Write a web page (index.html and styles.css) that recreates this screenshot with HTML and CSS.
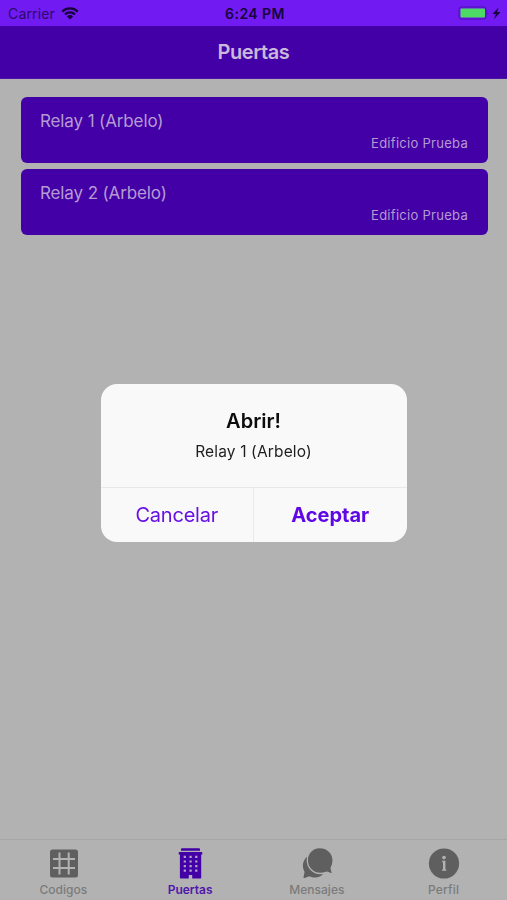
FILE: index.html
```html
<!DOCTYPE html>
<html lang="es">
<head>
    <meta charset="UTF-8">
    <meta name="viewport" content="width=device-width, initial-scale=1.0">
    <title>Puertas</title>
    <link rel="stylesheet" href="styles.css">
</head>
<body>
    <div class="app">
        <div class="status-bar">
            <div class="status-left">
                <span class="carrier">Carrier</span>
                <svg class="wifi" width="18" height="13" viewBox="0 0 18 13">
                    <path d="M1.2 4.6a11.2 11.2 0 0 1 15.6 0M4 7.4a7.2 7.2 0 0 1 10 0" fill="none" stroke="#17043c" stroke-width="2.2"/>
                    <path d="M5.9 9.4a4.5 4.5 0 0 1 6.2 0L9 12.6z" fill="#17043c"/>
                </svg>
            </div>
            <div class="status-time">6:24 PM</div>
            <div class="status-right">
                <svg width="44" height="14" viewBox="0 0 44 14">
                    <rect x="1" y="1" width="27" height="12" rx="2.5" fill="none" stroke="#4b0cac"/>
                    <rect x="2.5" y="2.5" width="24.5" height="9" rx="1" fill="#4cd964"/>
                    <path d="M29.6 5.200q1.600 1.800 0 3.600z" fill="#4b0cac"/>
                    <path d="M40.8 1.200l-6.300 6.800h3.300l-1.900 5.200 6.600-7.200h-3.500z" fill="#17043c"/>
                </svg>
            </div>
        </div>
        <div class="header">Puertas</div>
        <div class="content">
            <div class="card">
                <div class="card-title">Relay 1 (Arbelo)</div>
                <div class="card-note">Edificio Prueba</div>
            </div>
            <div class="card">
                <div class="card-title">Relay 2 (Arbelo)</div>
                <div class="card-note">Edificio Prueba</div>
            </div>
        </div>
        <div class="tabs">
            <a class="tab" href="javascript:;">
                <svg width="32" height="32" viewBox="0 0 32 32">
                    <rect x="3" y="1.500" width="28" height="28" rx="2.500" fill="#5f5f5f"/>
                    <path d="M12.500 4.500v22M21.700 4.500v22M6 10.900h22M6 20.100h22" stroke="#b2b2b2" stroke-width="2" fill="none"/>
                </svg>
                <span>Codigos</span>
            </a>
            <a class="tab active" href="javascript:;">
                <svg width="32" height="32" viewBox="0 0 32 32">
                    <path d="M8 .2h17a1 1 0 0 1 1 1v1.500H7V1.200a1 1 0 0 1 1-1zM5.500 4h22a.8.8 0 0 1 .8.800v1.600h-1.100V29.700a.8.8 0 0 1-.8.800H18.200v-3.600h-3.400v3.600H6.700a.8.8 0 0 1-.8-.8V6.400H4.700V4.800a.8.8 0 0 1 .8-.8z" fill="#4400a7"/>
                    <path d="M9.700 7.800h2.200v2.200H9.700zM15.500 7.800h2.200v2.200h-2.200zM21.200 7.800h2.200v2.200h-2.200zM9.700 12.400h2.200v2.200H9.700zM15.500 12.400h2.200v2.200h-2.200zM21.200 12.400h2.200v2.200h-2.200zM9.700 17h2.200v2.200H9.700zM15.500 17h2.200v2.200h-2.200zM21.200 17h2.200v2.200h-2.200zM9.700 21.600h2.200v2.200H9.700zM15.500 21.600h2.200v2.200h-2.200zM21.200 21.600h2.200v2.200h-2.200z" fill="#b2a4c6"/>
                </svg>
                <span>Puertas</span>
            </a>
            <a class="tab" href="javascript:;">
                <svg width="32" height="32" viewBox="0 0 32 32">
                    <path d="M5.500 9C1.500 13.500 1 18.500 3.200 23c.4.700.3 1.500.1 2.400l-.8 3.600c-.1.800.4 1.200 1.200 1l3.800-1.400c.8-.3 1.400-.2 2.200.1 4.700 1.900 10 .8 13.200-3.600z" fill="#5f5f5f"/>
                    <path d="M18.800-.3C11.500-.3 6.300 5 6.300 12.200c0 7.700 6 13.300 12.900 13.300 2.200 0 4.200-.5 5.700-1.200.6-.3 1-.2 1.600 0l3.300 1.200c1 .3 1.600-.2 1.400-1.100l-.9-3.500c-.2-.7-.1-1.200.2-1.800 1.100-1.800 1.600-3.900 1.600-6.500C32 5 26.300-.3 18.800-.3z" fill="#5f5f5f" stroke="#b2b2b2" stroke-width="1.300"/>
                </svg>
                <span>Mensajes</span>
            </a>
            <a class="tab perfil" href="javascript:;">
                <svg width="32" height="32" viewBox="0 0 32 32">
                    <circle cx="16" cy="15.500" r="15.100" fill="#5f5f5f"/>
                    <circle cx="16" cy="9.600" r="1.800" fill="#b2b2b2"/>
                    <path d="M14.200 12.800h3.200v8.600h.9v1.400h-4.300v-1.400h1v-7.200h-.8z" fill="#b2b2b2"/>
                </svg>
                <span>Perfil</span>
            </a>
        </div>
    </div>
    <div class="alert-wrap">
        <div class="alert">
            <div class="alert-body">
                <div class="alert-title">Abrir!</div>
                <div class="alert-message">Relay 1 (Arbelo)</div>
            </div>
            <div class="alert-buttons">
                <button class="alert-button">Cancelar</button>
                <button class="alert-button confirm">Aceptar</button>
            </div>
        </div>
    </div>
</body>
</html>
```
FILE: styles.css
```css
* {
    margin: 0;
    padding: 0;
    box-sizing: border-box;
}

body {
    font-family: Inter, "Liberation Sans", sans-serif;
    background: #b2b2b2;
}

a {
    text-decoration: none;
}

.app {
    display: flex;
    flex-direction: column;
    height: 900px;
}

.status-bar {
    display: grid;
    grid-template-columns: 1fr auto 1fr;
    align-items: center;
    height: 26px;
    padding: 1px 5px 0 8px;
    background: #711bf2;
    color: #17043c;
    font-size: 14px;
}

.status-left {
    display: flex;
    align-items: center;
    gap: 6px;
}

.carrier {
    color: #2c0a6a;
    letter-spacing: 0.15px;
}

.wifi {
    margin-top: -1px;
}

.status-time {
    font-weight: 600;
    letter-spacing: 0.45px;
}

.status-right {
    display: flex;
    justify-content: flex-end;
    margin-top: -1px;
}

.header {
    height: 53px;
    line-height: 53px;
    background: #4400a7;
    border-bottom: 1px solid #4b12a4;
    color: #c9b9dc;
    font-size: 20px;
    font-weight: 600;
    letter-spacing: -0.45px;
    text-align: center;
}

.content {
    flex: 1;
    display: flex;
    flex-direction: column;
    gap: 6px;
    padding: 18px 19.5px 0 20.5px;
}

.card {
    height: 66px;
    padding: 13px 19.5px 0;
    border-radius: 6px;
    background: #4400a7;
    color: #b59bd2;
}

.card-title {
    font-size: 17px;
    line-height: 22px;
    letter-spacing: -0.12px;
}

.card-note {
    font-size: 13px;
    line-height: 22px;
    letter-spacing: 0.28px;
    text-align: right;
}

.tabs {
    display: flex;
    height: 61px;
    border-top: 1px solid #a6a6a6;
}

.tab {
    flex: 1;
    display: flex;
    flex-direction: column;
    align-items: center;
    padding-top: 8px;
    color: #7b7b7b;
    font-size: 12px;
    font-weight: 500;
    line-height: 18px;
}

.tab span {
    margin-top: 1px;
}

.tab.active {
    color: #4f16ab;
    font-weight: 600;
}

.tab.perfil {
    letter-spacing: 0.2px;
}

/* centered dialog over the page */
.alert-wrap {
    position: fixed;
    top: 0;
    left: 0;
    width: 100%;
    height: 100%;
    display: flex;
    justify-content: center;
    padding-top: 384px;
}

.alert {
    width: 306px;
    height: 158px;
    border-radius: 16px;
    background: #f9f9f9;
    overflow: hidden;
    text-align: center;
}

.alert-body {
    height: 103px;
    padding-top: 24px;
}

.alert-title {
    color: #0c0c0c;
    font-size: 20px;
    font-weight: 600;
    line-height: 26px;
}

.alert-message {
    margin-top: 7px;
    color: #1e1e1e;
    font-size: 15.5px;
    line-height: 22px;
    letter-spacing: 0.15px;
}

.alert-buttons {
    display: flex;
    height: 55px;
    border-top: 1px solid #e9e9e9;
}

.alert-button {
    flex: 1;
    border: none;
    background: none;
    color: #6610e4;
    font-family: inherit;
    font-size: 20px;
    letter-spacing: -0.2px;
    padding-bottom: 1px;
}

.alert-button.confirm {
    border-left: 1px solid #e9e9e9;
    color: #5f08e6;
    font-weight: 700;
    letter-spacing: 0;
}
```
